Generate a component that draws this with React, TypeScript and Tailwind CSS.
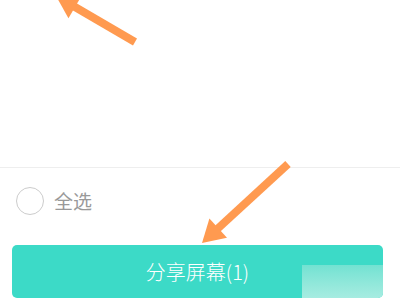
import React from "react";

function Arrow({ x1, y1, x2, y2 }: { x1: number; y1: number; x2: number; y2: number }) {
  // line from (x1,y1) to tip (x2,y2)
  const dx = x2 - x1;
  const dy = y2 - y1;
  const len = Math.hypot(dx, dy);
  const ux = dx / len;
  const uy = dy / len;
  const headLen = 22;
  const headW = 13;
  const bx = x2 - ux * headLen;
  const by = y2 - uy * headLen;
  const px = -uy;
  const py = ux;
  const pts = `${x2},${y2} ${bx + px * headW},${by + py * headW} ${bx - px * headW},${by - py * headW}`;
  return (
    <g>
      <line x1={x1} y1={y1} x2={bx + ux * 4} y2={by + uy * 4} stroke="#ff9a50" strokeWidth={8} />
      <polygon points={pts} fill="#ff9a50" />
    </g>
  );
}

export default function App() {
  return (
    <div className="relative h-[300px] w-[400px] overflow-hidden bg-white font-['Noto_Sans_CJK_SC',sans-serif]">
      <div className="h-[167px]" />
      <div className="flex h-[66px] items-center gap-[10px] border-t border-[#eeeeee] px-[16px]">
        <span className="h-[28px] w-[28px] rounded-full border-[1.5px] border-[#cccccc]" />
        <span className="text-[19px] leading-none text-[#999999]">全选</span>
      </div>
      <div className="px-[12px] pt-[12px]">
        <button className="relative flex h-[53px] w-[371px] items-center justify-center overflow-hidden rounded-[5px] bg-[#3cdac7] text-[20px] font-light text-white">
          分享屏幕(1)
          <span className="absolute bottom-0 right-0 h-[33px] w-[81px] bg-gradient-to-b from-[#72e2d2] to-[#a6ece1]" />
        </button>
      </div>
      <svg className="pointer-events-none absolute inset-0" width={400} height={300}>
        <Arrow x1={135} y1={42} x2={56} y2={-4} />
        <Arrow x1={288} y1={164} x2={202} y2={243} />
      </svg>
    </div>
  );
}
